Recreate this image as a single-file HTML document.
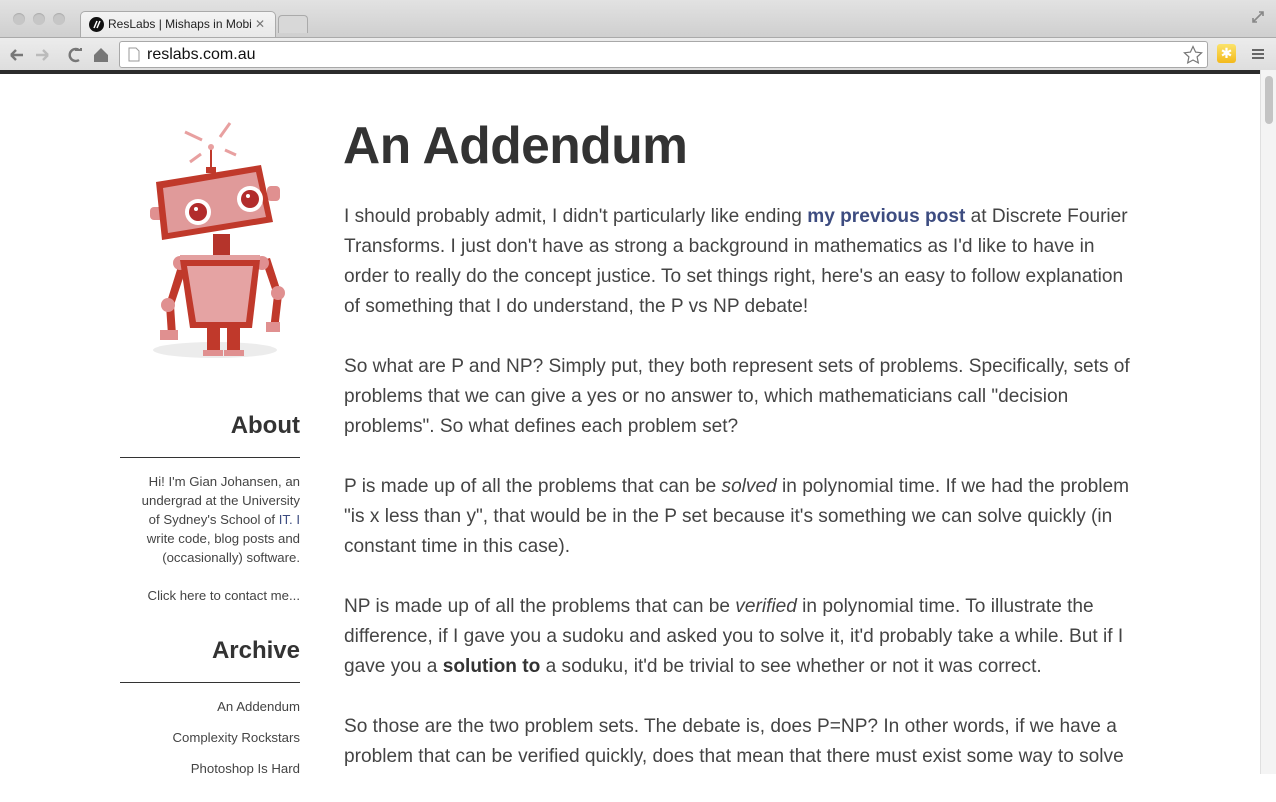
<!DOCTYPE html>
<html><head><meta charset="utf-8"><style>
*{margin:0;padding:0;box-sizing:border-box}
body{width:1276px;height:774px;overflow:hidden;background:#fff;font-family:"Liberation Sans",sans-serif;position:relative}
.tabbar{position:absolute;left:0;top:0;width:1276px;height:37px;background:linear-gradient(#e2e2e2,#cfcfcf)}
.dot{position:absolute;top:13px;width:12px;height:12px;border-radius:50%;background:#c6c6c6;box-shadow:inset 0 1px 1px #aaa}
.tab{position:absolute;left:80px;top:11px;width:196px;height:26px;background:linear-gradient(#f4f4f4,#e8e8e8);border:1px solid #aaa;border-bottom:none;border-radius:5px 5px 0 0}
.tab span{position:absolute;left:27px;top:5px;font-size:12px;color:#222;white-space:nowrap}
.tb2{position:absolute;left:278px;top:15px;width:30px;height:18px;border:1px solid #aaa;border-bottom:none;border-radius:4px 4px 0 0;background:#d8d8d8}
.toolbar{position:absolute;left:0;top:37px;width:1276px;height:33px;background:linear-gradient(#ececec,#dedede);border-top:1px solid #aaa}
.url{position:absolute;left:119px;top:3px;width:1089px;height:27px;background:#fff;border:1px solid #a8a8a8;border-radius:3px}
.url span{position:absolute;left:27px;top:4px;font-size:16px;color:#111}
.dark{position:absolute;left:0;top:70px;width:1260px;height:4px;background:#2c2c2c}
.scroll{position:absolute;left:1260px;top:70px;width:16px;height:704px;background:#f4f4f4;border-left:1px solid #e0e0e0}
.thumb{position:absolute;left:4px;top:6px;width:8px;height:48px;background:#c4c4c4;border-radius:4px}
h1{position:absolute;left:343px;top:115px;font-size:51.5px;font-weight:bold;color:#333;letter-spacing:-0.5px}
.main{position:absolute;left:344px;top:202px;font-size:19.1px;line-height:30px;color:#444;white-space:nowrap}
.main p{margin-bottom:30px}
.main b{color:#333}
.main a{color:#3d4c80;font-weight:bold;text-decoration:none}
.side{position:absolute;left:100px;width:200px;text-align:right;color:#444}
.side h2{font-size:24px;font-weight:bold;color:#333}
.hr{position:absolute;left:120px;width:180px;height:1px;background:#333}
.st{font-size:13.2px;line-height:19px;white-space:nowrap}
</style></head><body>
<div class="tabbar">
<div class="dot" style="left:13px"></div><div class="dot" style="left:33px"></div><div class="dot" style="left:53px"></div>
<div class="tab"><svg style="position:absolute;left:8px;top:5px" width="15" height="15"><circle cx="7.5" cy="7.5" r="7.5" fill="#111"/><path d="M5 11 L8 4 M8 11 L11 4" stroke="#fff" stroke-width="1.5"/></svg><span>ResLabs | Mishaps in Mobi</span><span style="left:174px;color:#777">✕</span></div>
<div class="tb2"></div>
<svg style="position:absolute;left:1251px;top:10px" width="14" height="14"><path d="M2 12 L12 2 M8 2h4v4 M2 8v4h4" stroke="#888" stroke-width="1.6" fill="none"/></svg>
</div>
<div class="toolbar">
<svg style="position:absolute;left:8px;top:8px" width="100" height="18"><path d="M3 9h12 M3 9l5-5 M3 9l5 5" stroke="#777" stroke-width="2.4" fill="none"/><path d="M40 9h-12 M40 9l-5-5 M40 9l-5 5" stroke="#bbb" stroke-width="2.4" fill="none"/><path d="M71 4 A6 6 0 1 0 71 14" stroke="#777" stroke-width="2.4" fill="none"/><path d="M67 4h6v-2" stroke="#777" stroke-width="2" fill="none"/><path d="M86 9 l7-7 l7 7 v7 h-14z" fill="#777"/></svg>
<div class="url"><svg style="position:absolute;left:8px;top:5px" width="12" height="15"><path d="M1 1h7l3 3v10H1z" fill="#fff" stroke="#999"/></svg><span>reslabs.com.au</span>
<svg style="position:absolute;left:1063px;top:3px" width="20" height="20"><path d="M10 1.5l2.6 5.6 6 .7-4.5 4.1 1.2 6L10 15l-5.3 2.9 1.2-6L1.4 7.8l6-.7z" fill="none" stroke="#777" stroke-width="1.2"/></svg></div>
<div style="position:absolute;left:1217px;top:6px;width:19px;height:19px;border-radius:3px;background:linear-gradient(#fbe36a,#f3b91c);color:#fff;font-size:14px;text-align:center;line-height:19px">✱</div>
<div style="position:absolute;left:1252px;top:11px;width:12px;height:2px;background:#666;box-shadow:0 4px #666,0 8px #666"></div>
</div>
<div class="dark"></div>
<div class="scroll"><div class="thumb"></div></div>

<svg style="position:absolute;left:130px;top:110px" width="180" height="260" viewBox="0 0 180 260">
<ellipse cx="85" cy="240" rx="62" ry="8" fill="#ececec"/>
<g stroke="#e8a0a0" stroke-width="3"><path d="M55 22 L72 30"/><path d="M100 13 L90 27"/><path d="M95 40 L106 45"/><path d="M60 52 L71 44"/></g>
<rect x="80" y="38" width="2" height="20" fill="#c0392b"/><circle cx="81" cy="37" r="3" fill="#e8a0a0"/>
<rect x="76" y="57" width="10" height="6" fill="#c0392b"/>
<rect x="20" y="97" width="14" height="13" rx="4" fill="#e09090"/><rect x="137" y="76" width="13" height="15" rx="4" fill="#e09090"/>
<path d="M26 72 L131 55 L143 112 L32 130 Z" fill="#c0392b"/>
<path d="M33 78 L126 62 L136 107 L38 123 Z" fill="#e09a9a"/>
<circle cx="68" cy="102" r="13" fill="#fff"/><circle cx="68" cy="102" r="9" fill="#b22c2c"/><circle cx="66" cy="99" r="2" fill="#fff"/>
<circle cx="120" cy="89" r="13" fill="#fff"/><circle cx="120" cy="89" r="9" fill="#b22c2c"/><circle cx="118" cy="86" r="2" fill="#fff"/>
<rect x="83" y="124" width="17" height="26" fill="#b5342b"/>
<path d="M50 150 l-14 45 l2 30 h8 l-2-30 l14-42z" fill="#c0392b"/>
<path d="M132 150 l12 35 l-4 35 h8 l4-35 l-12-37z" fill="#c0392b"/>
<circle cx="50" cy="153" r="7" fill="#e09090"/><circle cx="132" cy="153" r="7" fill="#e09090"/>
<circle cx="38" cy="195" r="7" fill="#e09090"/><circle cx="148" cy="183" r="7" fill="#e09090"/>
<rect x="30" y="220" width="18" height="10" fill="#e09090"/><rect x="136" y="212" width="14" height="10" fill="#e09090"/>
<rect x="50" y="145" width="80" height="8" fill="#e3a0a0"/>
<path d="M50 150 L130 150 L122 218 L60 218 Z" fill="#c0392b"/><path d="M57 156 L123 156 L116 212 L66 212 Z" fill="#e5a3a3"/>
<rect x="77" y="218" width="13" height="24" fill="#c0392b"/><rect x="97" y="218" width="13" height="24" fill="#c0392b"/>
<rect x="73" y="240" width="20" height="6" fill="#e09090"/><rect x="94" y="240" width="20" height="6" fill="#e09090"/>
</svg>

<div class="side" style="top:412px"><h2>About</h2></div>
<div class="hr" style="top:457px"></div>
<div class="side st" style="top:472px">Hi! I'm Gian Johansen, an<br>undergrad at the University<br>of Sydney's School of <span style="color:#3d4c80">IT. I</span><br>write code, blog posts and<br>(occasionally) software.</div>
<div class="side st" style="top:586px">Click here to contact me...</div>
<div class="side" style="top:637px"><h2>Archive</h2></div>
<div class="hr" style="top:682px"></div>
<div class="side st" style="top:697px">An Addendum</div>
<div class="side st" style="top:728px">Complexity Rockstars</div>
<div class="side st" style="top:759px">Photoshop Is Hard</div>

<h1>An Addendum</h1>
<div class="main">
<p>I should probably admit, I didn't particularly like ending <a>my previous post</a> at Discrete Fourier<br>Transforms. I just don't have as strong a background in mathematics as I'd like to have in<br>order to really do the concept justice. To set things right, here's an easy to follow explanation<br>of something that I do understand, the P vs NP debate!</p>
<p>So what are P and NP? Simply put, they both represent sets of problems. Specifically, sets of<br>problems that we can give a yes or no answer to, which mathematicians call "decision<br>problems". So what defines each problem set?</p>
<p>P is made up of all the problems that can be <i>solved</i> in polynomial time. If we had the problem<br>"is x less than y", that would be in the P set because it's something we can solve quickly (in<br>constant time in this case).</p>
<p>NP is made up of all the problems that can be <i>verified</i> in polynomial time. To illustrate the<br>difference, if I gave you a sudoku and asked you to solve it, it'd probably take a while. But if I<br>gave you a <b>solution to</b> a soduku, it'd be trivial to see whether or not it was correct.</p>
<p>So those are the two problem sets. The debate is, does P=NP? In other words, if we have a<br>problem that can be verified quickly, does that mean that there must exist some way to solve</p>
</div>
</body></html>
